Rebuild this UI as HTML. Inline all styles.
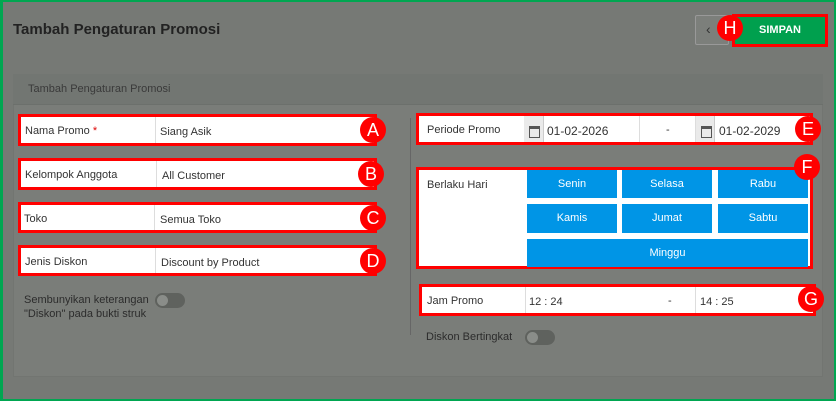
<!DOCTYPE html>
<html><head><meta charset="utf-8"><style>
*{box-sizing:border-box;margin:0;padding:0}
body{width:836px;height:401px;position:relative;overflow:hidden;background:#767975;font-family:"Liberation Sans",sans-serif;color:#333}
.a{position:absolute}
.frame{left:0;top:0;width:836px;height:401px;border:2px solid #00a651;border-left-width:3px}
.t{font-size:11px;white-space:nowrap}
.box{border:3px solid #f00;background:#fff;position:absolute}
.circ{position:absolute;width:26px;height:26px;border-radius:50%;background:#f00;color:#fff;font-size:18px;text-align:center;line-height:26px}
.btn{position:absolute;background:#0095e6;color:#fff;font-size:11px;text-align:center}
.tog{position:absolute;width:30px;height:15px;border-radius:8px;background:#5f625e}
.tog:after{content:"";position:absolute;left:2px;top:2px;width:11px;height:11px;border-radius:50%;background:#8a8d89}
.cal{position:absolute;width:20px;background:#eaeaea;border-right:1px solid #ccc;top:0;bottom:0}
.cal:before{content:"";position:absolute;left:5px;top:10px;width:9px;height:8px;border:1px solid #555;border-top-width:3px}
</style></head><body>
<div class="a" style="left:13px;top:21px;font-size:15px;font-weight:bold;color:#222">Tambah Pengaturan Promosi</div>
<div class="a" style="left:695px;top:15px;width:34px;height:30px;border:1px solid #999;background:#7c7f7b;border-radius:2px;color:#333;font-size:14px;padding-left:10px;line-height:27px">‹</div>
<div class="a" style="left:732px;top:14px;width:96px;height:33px;border:3px solid #f00;background:#00a04e;color:#fff;font-size:11px;font-weight:bold;text-align:center;line-height:27px">SIMPAN</div>
<div class="circ" style="left:717px;top:15px">H</div>

<div class="a" style="left:13px;top:74px;width:810px;height:303px;background:#7a7d79;border:1px solid #727571"></div>
<div class="a" style="left:13px;top:74px;width:810px;height:31px;background:#727672;border-bottom:1px solid #6c706c"></div>
<div class="a t" style="left:28px;top:83px;color:#3a3a3a">Tambah Pengaturan Promosi</div>

<div class="box" style="left:18px;top:114px;width:359px;height:32px"><div class="a" style="left:134px;top:0;bottom:0;border-left:1px solid #ddd"></div><span class="a t" style="left:4px;top:8px">Nama Promo <span style="color:#d00">*</span></span><span class="a t" style="left:139px;top:9px">Siang Asik</span></div>
<div class="circ" style="left:360px;top:117px">A</div>
<div class="box" style="left:18px;top:158px;width:359px;height:32px"><div class="a" style="left:135px;top:0;bottom:0;border-left:1px solid #ddd"></div><span class="a t" style="left:4px;top:8px">Kelompok Anggota</span><span class="a t" style="left:141px;top:9px">All Customer</span></div>
<div class="circ" style="left:358px;top:161px">B</div>
<div class="box" style="left:18px;top:202px;width:359px;height:31px"><div class="a" style="left:133px;top:0;bottom:0;border-left:1px solid #ddd"></div><span class="a t" style="left:3px;top:8px">Toko</span><span class="a t" style="left:139px;top:9px">Semua Toko</span></div>
<div class="circ" style="left:360px;top:205px">C</div>
<div class="box" style="left:18px;top:245px;width:359px;height:31px"><div class="a" style="left:134px;top:0;bottom:0;border-left:1px solid #ddd"></div><span class="a t" style="left:4px;top:8px">Jenis Diskon</span><span class="a t" style="left:140px;top:9px">Discount by Product</span></div>
<div class="circ" style="left:360px;top:248px">D</div>

<div class="a t" style="left:24px;top:293px;line-height:14px;color:#2c2c2c">Sembunyikan keterangan<br>"Diskon" pada bukti struk</div>
<div class="tog" style="left:155px;top:293px"></div>

<div class="a" style="left:410px;top:118px;width:1px;height:217px;background:#666"></div>

<div class="box" style="left:416px;top:113px;width:397px;height:32px"><span class="a t" style="left:8px;top:8px">Periode Promo</span>
<div class="cal" style="left:105px"></div><div class="a" style="left:125px;top:0;bottom:0;width:96px;border-right:1px solid #ddd"></div><span class="a t" style="left:128px;top:8px;font-size:12px">01-02-2026</span>
<span class="a t" style="left:247px;top:8px">-</span>
<div class="cal" style="left:276px;border-left:1px solid #ddd"></div><span class="a t" style="left:300px;top:8px;font-size:12px">01-02-2029</span></div>
<div class="circ" style="left:795px;top:116px">E</div>

<div class="box" style="left:416px;top:167px;width:397px;height:102px"><span class="a t" style="left:8px;top:9px">Berlaku Hari</span></div>
<div class="btn" style="left:527px;top:170px;width:90px;height:28px;line-height:28px">Senin</div>
<div class="btn" style="left:622px;top:170px;width:90px;height:28px;line-height:28px">Selasa</div>
<div class="btn" style="left:718px;top:170px;width:90px;height:28px;line-height:28px">Rabu</div>
<div class="btn" style="left:527px;top:204px;width:90px;height:29px;line-height:29px">Kamis</div>
<div class="btn" style="left:622px;top:204px;width:90px;height:29px;line-height:29px">Jumat</div>
<div class="btn" style="left:718px;top:204px;width:90px;height:29px;line-height:29px">Sabtu</div>
<div class="btn" style="left:527px;top:239px;width:281px;height:28px;line-height:28px">Minggu</div>
<div class="circ" style="left:794px;top:154px">F</div>

<div class="box" style="left:419px;top:284px;width:397px;height:32px"><span class="a t" style="left:5px;top:8px">Jam Promo</span><div class="a" style="left:103px;top:0;bottom:0;border-left:1px solid #ddd"></div><span class="a t" style="left:107px;top:9px">12 : 24</span><span class="a t" style="left:246px;top:8px">-</span><div class="a" style="left:273px;top:0;bottom:0;border-left:1px solid #ddd"></div><span class="a t" style="left:278px;top:9px">14 : 25</span></div>
<div class="circ" style="left:798px;top:286px">G</div>

<div class="a t" style="left:426px;top:331px;color:#2c2c2c">Diskon Bertingkat</div>
<div class="tog" style="left:525px;top:330px"></div>
<div class="a frame"></div>
</body></html>
